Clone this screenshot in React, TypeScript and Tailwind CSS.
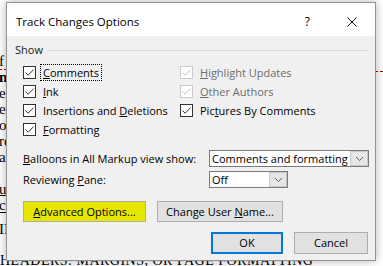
import React from "react";

function Check({ disabled }: { disabled?: boolean }) {
  return (
    <span
      className={
        disabled
          ? "flex h-[13px] w-[13px] shrink-0 items-center justify-center border border-[#cccccc] bg-white"
          : "flex h-[13px] w-[13px] shrink-0 items-center justify-center border border-[#333333] bg-white"
      }
    >
      <svg width="11" height="11" viewBox="0 0 11 11">
        <path
          d="M1.5 5.5 L4.2 8.2 L9.6 2.6"
          fill="none"
          stroke={disabled ? "#c4c4c4" : "#333333"}
          strokeWidth="1"
        />
      </svg>
    </span>
  );
}

function Row({
  disabled,
  focused,
  children,
}: {
  disabled?: boolean;
  focused?: boolean;
  children: React.ReactNode;
}) {
  return (
    <div className="flex h-[19px] items-center gap-[4px]">
      <Check disabled={disabled} />
      <span
        className={
          focused
            ? "h-[17px] border border-dotted border-black px-[2px] leading-[15px] text-black"
            : disabled
            ? "h-[17px] border border-transparent px-[2px] leading-[15px] text-[#6d6d6d]"
            : "h-[17px] border border-transparent px-[2px] leading-[15px] text-black"
        }
      >
        {children}
      </span>
    </div>
  );
}

function Chevron() {
  return (
    <svg width="9" height="6" viewBox="0 0 9 6">
      <path d="M1 1 L4.5 4.5 L8 1" fill="none" stroke="#606060" strokeWidth="1" />
    </svg>
  );
}

function Select({ value, wide }: { value: string; wide?: boolean }) {
  return (
    <div
      className={
        wide
          ? "flex h-[17px] w-[160px] border border-[#7a7a7a] bg-white"
          : "flex h-[17px] w-[79px] border border-[#7a7a7a] bg-white"
      }
    >
      <span className="flex-1 overflow-hidden whitespace-nowrap pl-[2px] leading-[15px]">{value}</span>
      <span className="flex w-[18px] items-center justify-center border border-[#c8c8c8] bg-[#e6e6e6]">
        <Chevron />
      </span>
    </div>
  );
}

export default function App() {
  return (
    <div className="relative h-[266px] w-[383px] overflow-hidden bg-white font-['Liberation_Serif',serif] text-[15px] leading-[16px] text-black">
      {/* document behind the dialog */}
      <div className="flex h-[266px] flex-col">
        <div className="flex flex-1">
          <div className="flex w-[24px] flex-col pt-[53px]">
            <div className="h-[16px]">
              <span className="-ml-[1px] border-b border-dashed border-[#c00000] leading-[14px]">f t</span>
            </div>
            <div className="h-[16px] -ml-[1px] font-bold">n</div>
            <div className="h-[16px] -ml-[1px]">e</div>
            <div className="h-[16px] -ml-[1px]">ev</div>
            <div className="h-[16px] -ml-[1px]">or</div>
            <div className="h-[16px] -ml-[1px]">re</div>
            <div className="h-[16px] -ml-[1px]">ar</div>
            <div className="h-[16px]" />
            <div className="h-[16px] -ml-[1px] underline">ul</div>
            <div className="h-[16px] -ml-[1px] border-b border-black">c</div>
            <div className="h-[10px]" />
            <div className="h-[12px] -ml-[1px] leading-[12px]">II</div>
          </div>
          <div className="ml-auto flex w-[8px] flex-col pt-[71px]">
            <span className="h-0 border-b border-dashed border-[#c00000]" />
          </div>
        </div>
        <div className="mb-[-2px] h-[14px] whitespace-nowrap text-[14px] leading-[14px] tracking-[0.5px]">
          HEADERS: MARGINS, OR PAGE FORMATTING
        </div>
      </div>

      {/* dialog */}
      <div className="absolute left-[6px] top-[2px] flex h-[259px] w-[370px] flex-col border border-[#939393] bg-[#f0f0f0] font-['Open_Sans',sans-serif] text-[11px] text-black shadow-[0_0_9px_rgba(0,0,0,0.3)]">
        <div className="flex h-[33px] shrink-0 items-center bg-white pl-[9px] pr-[18px] pt-[4px]">
          <span className="text-[11.5px]">Track Changes Options</span>
          <span className="ml-auto text-[12px]">?</span>
          <span className="ml-[37px] flex h-[10px] w-[10px]">
            <svg width="10" height="10" viewBox="0 0 10 10">
              <path d="M0.5 0.5 L9.5 9.5 M9.5 0.5 L0.5 9.5" stroke="#111" strokeWidth="1" />
            </svg>
          </span>
        </div>

        <div className="flex flex-1 flex-col pt-[6px]">
          <div className="flex h-[16px] items-center pl-[8px] pr-[7px]">
            <span className="text-[#222]">Show</span>
            <span className="ml-[5px] h-px flex-1 bg-[#d9d9d9]" />
          </div>

          <div className="mt-[5px] flex pl-[16px]">
            <div className="flex w-[157px] flex-col">
              <Row focused>
                <u>C</u>omments
              </Row>
              <Row>
                <u>I</u>nk
              </Row>
              <Row>
                Insertions and <u>D</u>eletions
              </Row>
              <Row>
                <u>F</u>ormatting
              </Row>
            </div>
            <div className="flex flex-col">
              <Row disabled>
                <u>H</u>ighlight Updates
              </Row>
              <Row disabled>
                <u>O</u>ther Authors
              </Row>
              <Row>
                Pic<u>t</u>ures By Comments
              </Row>
            </div>
          </div>

          <div className="mt-[11px] flex items-center pl-[16px]">
            <span className="w-[186px]">
              <u>B</u>alloons in All Markup view show:
            </span>
            <Select value="Comments and formatting" wide />
          </div>
          <div className="mt-[4px] flex items-center pl-[16px]">
            <span className="w-[186px]">
              Reviewing <u>P</u>ane:
            </span>
            <Select value="Off" />
          </div>

          <div className="mt-[13px] flex gap-[11px] pl-[16px]">
            <button className="flex h-[21px] w-[123px] items-center justify-center border border-[#adadad] bg-[#e6e600]">
              <span>
                <u>A</u>dvanced Options...
              </span>
            </button>
            <button className="flex h-[21px] w-[126px] items-center justify-center border border-[#adadad] bg-[#e1e1e1]">
              <span>
                Change User <u>N</u>ame...
              </span>
            </button>
          </div>

          <div className="mt-[10px] flex justify-end gap-[11px] pr-[7px]">
            <button className="flex h-[22px] w-[72px] items-center justify-center border-2 border-[#0078d7] bg-[#e1e1e1]">
              OK
            </button>
            <button className="flex h-[22px] w-[74px] items-center justify-center border border-[#adadad] bg-[#e1e1e1]">
              Cancel
            </button>
          </div>
        </div>
      </div>
    </div>
  );
}
